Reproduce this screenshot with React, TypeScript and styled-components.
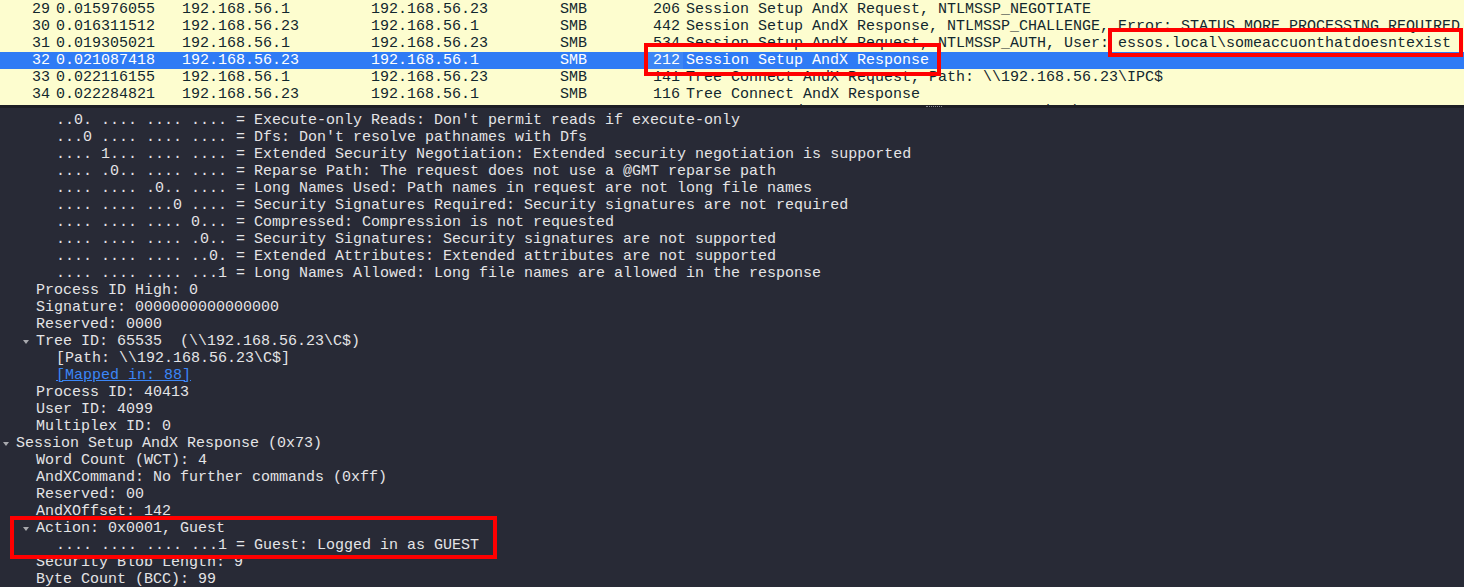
import React, { FC, ReactElement } from 'react';
import styled, { createGlobalStyle } from 'styled-components';

const GlobalStyle = createGlobalStyle`
  html, body {
    margin: 0;
    padding: 0;
    background: #282a36;
  }
  body {
    font-family: "Liberation Mono", "DejaVu Sans Mono", monospace;
    font-size: 15px;
  }
`;

const Wrapper = styled.div`
  position: relative;
  width: 1464px;
  height: 587px;
  overflow: hidden;
  display: flex;
  flex-direction: column;
  background: #282a36;
`;

const PacketList = styled.div`
  height: 105px;
  box-sizing: border-box;
  padding-top: 1px;
  overflow: hidden;
  background: #fdfdcf;
  color: #12272e;
  flex-shrink: 0;
`;

const PacketRow = styled.div<{ $selected?: boolean }>`
  display: grid;
  grid-template-columns: 50px 6px 126px 189px 189px 85px 38px 3px 1fr;
  height: 17px;
  line-height: 17px;
  white-space: pre;
  background: ${p => (p.$selected ? '#2f7bf5' : 'transparent')};
  color: ${p => (p.$selected ? '#ffffff' : '#12272e')};
`;

const Cell = styled.span<{ $right?: boolean }>`
  text-align: ${p => (p.$right ? 'right' : 'left')};
  overflow: hidden;
`;

const LengthCell = styled.span<{ $selected?: boolean }>`
  text-align: right;
  padding-right: 3px;
  background: ${p => (p.$selected ? '#3d86f4' : 'transparent')};
`;

const Splitter = styled.div`
  height: 3px;
  flex-shrink: 0;
  background: #1d1e25;
  display: flex;
  justify-content: flex-end;
  padding-right: 522px;
`;

const Grip = styled.div`
  width: 16px;
  height: 1px;
  margin-top: 1px;
  border-top: 1px dotted #8a8c94;
`;

const Details = styled.div`
  flex: 1;
  overflow: hidden;
  padding-top: 4px;
  color: #e4e4e6;
`;

const TreeRow = styled.div<{ $level: number }>`
  position: relative;
  height: 17px;
  line-height: 17px;
  white-space: pre;
  padding-left: ${p => 16 + p.$level * 20}px;
`;

const Arrow = styled.span<{ $level: number }>`
  position: absolute;
  top: 7px;
  left: ${p => 3 + p.$level * 20}px;
  width: 0;
  height: 0;
  border-left: 3.5px solid transparent;
  border-right: 3.5px solid transparent;
  border-top: 4px solid #a8a9ae;
`;

const LinkText = styled.span`
  color: #3b86f7;
  text-decoration: underline;
`;

const Highlight = styled.div`
  position: absolute;
  border: 4px solid #ff0000;
  box-sizing: border-box;
  pointer-events: none;
`;

type Packet = [string, string, string, string, string, string, string];

const packets: Packet[] = [
  ['29', '0.015976055', '192.168.56.1', '192.168.56.23', 'SMB', '206', 'Session Setup AndX Request, NTLMSSP_NEGOTIATE'],
  ['30', '0.016311512', '192.168.56.23', '192.168.56.1', 'SMB', '442', 'Session Setup AndX Response, NTLMSSP_CHALLENGE, Error: STATUS_MORE_PROCESSING_REQUIRED'],
  ['31', '0.019305021', '192.168.56.1', '192.168.56.23', 'SMB', '534', 'Session Setup AndX Request, NTLMSSP_AUTH, User: essos.local\\someaccuonthatdoesntexist'],
  ['32', '0.021087418', '192.168.56.23', '192.168.56.1', 'SMB', '212', 'Session Setup AndX Response'],
  ['33', '0.022116155', '192.168.56.1', '192.168.56.23', 'SMB', '141', 'Tree Connect AndX Request, Path: \\\\192.168.56.23\\IPC$'],
  ['34', '0.022284821', '192.168.56.23', '192.168.56.1', 'SMB', '116', 'Tree Connect AndX Response'],
  ['35', '0.022382453', '192.168.56.1', '192.168.56.23', 'SMB', '194', 'NT Create AndX Request, FID: 0x4000, Path: \\srvsvc'],
];

type Line = { level: number; text: string; open?: boolean; link?: boolean };

const lines: Line[] = [
  { level: 2, text: '..0. .... .... .... = Execute-only Reads: Don\'t permit reads if execute-only' },
  { level: 2, text: '...0 .... .... .... = Dfs: Don\'t resolve pathnames with Dfs' },
  { level: 2, text: '.... 1... .... .... = Extended Security Negotiation: Extended security negotiation is supported' },
  { level: 2, text: '.... .0.. .... .... = Reparse Path: The request does not use a @GMT reparse path' },
  { level: 2, text: '.... .... .0.. .... = Long Names Used: Path names in request are not long file names' },
  { level: 2, text: '.... .... ...0 .... = Security Signatures Required: Security signatures are not required' },
  { level: 2, text: '.... .... .... 0... = Compressed: Compression is not requested' },
  { level: 2, text: '.... .... .... .0.. = Security Signatures: Security signatures are not supported' },
  { level: 2, text: '.... .... .... ..0. = Extended Attributes: Extended attributes are not supported' },
  { level: 2, text: '.... .... .... ...1 = Long Names Allowed: Long file names are allowed in the response' },
  { level: 1, text: 'Process ID High: 0' },
  { level: 1, text: 'Signature: 0000000000000000' },
  { level: 1, text: 'Reserved: 0000' },
  { level: 1, text: 'Tree ID: 65535  (\\\\192.168.56.23\\C$)', open: true },
  { level: 2, text: '[Path: \\\\192.168.56.23\\C$]' },
  { level: 2, text: '[Mapped in: 88]', link: true },
  { level: 1, text: 'Process ID: 40413' },
  { level: 1, text: 'User ID: 4099' },
  { level: 1, text: 'Multiplex ID: 0' },
  { level: 0, text: 'Session Setup AndX Response (0x73)', open: true },
  { level: 1, text: 'Word Count (WCT): 4' },
  { level: 1, text: 'AndXCommand: No further commands (0xff)' },
  { level: 1, text: 'Reserved: 00' },
  { level: 1, text: 'AndXOffset: 142' },
  { level: 1, text: 'Action: 0x0001, Guest', open: true },
  { level: 2, text: '.... .... .... ...1 = Guest: Logged in as GUEST' },
  { level: 1, text: 'Security Blob Length: 9' },
  { level: 1, text: 'Byte Count (BCC): 99' },
];

const boxes = [
  { left: 644, top: 43, width: 297, height: 33 },
  { left: 1108, top: 28, width: 355, height: 29 },
  { left: 10, top: 516, width: 487, height: 43 },
];

const App: FC = (): ReactElement => (
  <Wrapper>
    <GlobalStyle />
    <PacketList>
      {packets.map(p => {
        const selected = p[0] === '32';
        return (
          <PacketRow key={p[0]} $selected={selected}>
            <Cell $right>{p[0]}</Cell>
            <span />
            <Cell>{p[1]}</Cell>
            <Cell>{p[2]}</Cell>
            <Cell>{p[3]}</Cell>
            <Cell>{p[4]}</Cell>
            <LengthCell $selected={selected}>{p[5]}</LengthCell>
            <span />
            <Cell>{p[6]}</Cell>
          </PacketRow>
        );
      })}
    </PacketList>
    <Splitter>
      <Grip />
    </Splitter>
    <Details>
      {lines.map((l, i) => (
        <TreeRow key={i} $level={l.level}>
          {l.open && <Arrow $level={l.level} />}
          {l.link ? <LinkText>{l.text}</LinkText> : l.text}
        </TreeRow>
      ))}
    </Details>
    {boxes.map((b, i) => (
      <Highlight key={i} style={b} />
    ))}
  </Wrapper>
);

export default App;
